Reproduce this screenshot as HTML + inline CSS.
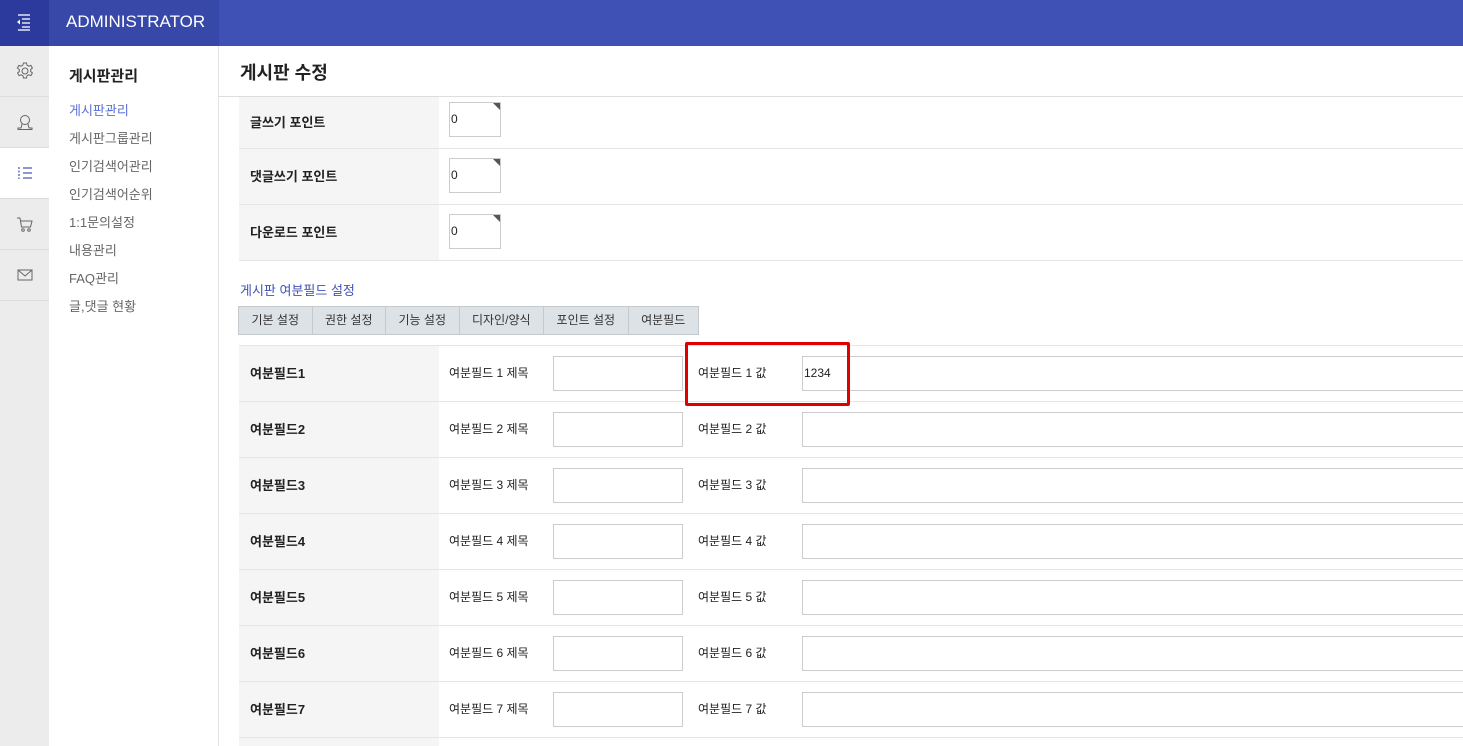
<!DOCTYPE html>
<html><head><meta charset="utf-8"><style>
*{margin:0;padding:0;box-sizing:border-box}
html,body{width:1463px;height:746px;overflow:hidden}
body{background:#fff;font-family:"Liberation Sans","Noto Sans CJK KR",sans-serif;position:relative;color:#222}
.a{position:absolute}
.hdr{left:0;top:0;width:1463px;height:46px;background:#3f51b5}
.hl{left:0;top:0;width:49px;height:46px;background:#2b3a9c}
.hm{left:49px;top:0;width:170px;height:46px;background:#3748a8;color:#fff;font-size:17px;line-height:44px;padding-left:17px}
.icol{left:0;top:46px;width:49px;height:700px;background:#ececec}
.ic{left:0;width:49px;height:51px;border-bottom:1px solid #dcdcdc;display:flex;align-items:center;justify-content:center}
.sub{left:49px;top:46px;width:170px;height:700px;background:#fff;border-right:1px solid #e3e3e3}
.sub h3{position:absolute;left:20px;top:19px;font-size:15px;font-weight:bold;color:#222}
.sub div{position:absolute;left:20px;font-size:13px;color:#666}
.ttl{left:240px;top:59px;font-size:18px;font-weight:bold;color:#222}
.tline{left:219px;top:96px;width:1244px;height:1px;background:#ddd}
.row{left:239px;width:1224px;height:56px;border-bottom:1px solid #e5e5e5}
.lab{position:absolute;left:0;top:0;width:200px;height:55px;background:#f5f5f5;font-size:13px;font-weight:bold;line-height:55px;padding-left:11px}
.pt{position:absolute;left:210px;top:9px;width:52px;height:35px;border:1px solid #ccc;font-size:12px;line-height:33px;padding-left:1px}
.pt:after{content:"";position:absolute;right:0;top:0;border-top:7px solid #555;border-left:7px solid transparent}
.t{position:absolute;font-size:12px;line-height:55px;top:0}
.in{position:absolute;top:10px;height:35px;border:1px solid #ccc;font-size:12px;line-height:33px;padding-left:1px}
.sec{left:240px;top:280px;font-size:13px;color:#3f51b5}
.tabs{left:238px;top:306px;height:29px;display:flex;border:1px solid #c4c9ce;background:#dde2e7}
.tabs div{font-size:12px;line-height:27px;padding:0 12.5px;border-right:1px solid #c4c9ce;color:#333}
.tabs div:last-child{border-right:0}
</style></head><body>
<div class="a hdr"></div>
<div class="a hl"><svg width="49" height="46"><g stroke="#fff" stroke-width="1.3"><line x1="18" y1="15" x2="30" y2="15"/><line x1="22" y1="19" x2="30" y2="19"/><line x1="22" y1="23" x2="30" y2="23"/><line x1="22" y1="27" x2="30" y2="27"/><line x1="18" y1="30" x2="30" y2="30"/></g><path d="M17 22 L20 19.5 L20 24.5Z" fill="#fff"/></svg></div>
<div class="a hm">ADMINISTRATOR</div>
<div class="a icol"></div>
<div class="a ic" style="top:46px"><svg width="20" height="20" viewBox="0 0 20 20" fill="none" stroke="#666" stroke-width="1"><circle cx="10" cy="10" r="3"/><path d="M8.5 2h3l.5 2.2 1.8 1 2.1-.8 1.5 2.6-1.7 1.5v2l1.7 1.5-1.5 2.6-2.1-.8-1.8 1-.5 2.2h-3l-.5-2.2-1.8-1-2.1.8-1.5-2.6 1.7-1.5v-2L2.4 7l1.5-2.6 2.1.8 1.8-1z"/></svg></div>
<div class="a ic" style="top:97px"><svg width="20" height="20" fill="none" stroke="#666" stroke-width="1"><circle cx="10" cy="8" r="4.5"/><path d="M7 12 L6 16 H3 V17.5 H17 V16 H14 L13 12"/></svg></div>
<div class="a ic" style="top:148px;background:#fff"><svg width="20" height="20" stroke="#3f51b5" stroke-width="1.2"><line x1="8" y1="5" x2="17" y2="5"/><line x1="8" y1="10" x2="17" y2="10"/><line x1="8" y1="15" x2="17" y2="15"/><line x1="4" y1="4" x2="4" y2="16" stroke-dasharray="2 1.5"/></svg></div>
<div class="a ic" style="top:199px"><svg width="20" height="20" fill="none" stroke="#666" stroke-width="1"><path d="M2 4h3l1.5 9h9l1.5-6H6"/><circle cx="8" cy="16" r="1.3"/><circle cx="14" cy="16" r="1.3"/></svg></div>
<div class="a ic" style="top:250px"><svg width="20" height="20" fill="none" stroke="#666" stroke-width="1"><rect x="3" y="5" width="14" height="10"/><path d="M3 5l7 6 7-6"/></svg></div>
<div class="a sub"><h3>게시판관리</h3>
<div style="top:54px;color:#5a6fd6">게시판관리</div>
<div style="top:82px">게시판그룹관리</div>
<div style="top:110px">인기검색어관리</div>
<div style="top:138px">인기검색어순위</div>
<div style="top:166px">1:1문의설정</div>
<div style="top:194px">내용관리</div>
<div style="top:222px">FAQ관리</div>
<div style="top:250px">글,댓글 현황</div>
</div>
<div class="a ttl">게시판 수정</div>
<div class="a tline"></div>
<div class="a row" style="top:92px;height:57px"><div class="lab" style="top:5px;height:51px;line-height:51px">글쓰기 포인트</div><div class="pt" style="top:10px">0</div></div>
<div class="a row" style="top:149px"><div class="lab">댓글쓰기 포인트</div><div class="pt">0</div></div>
<div class="a row" style="top:205px"><div class="lab">다운로드 포인트</div><div class="pt">0</div></div>
<div class="a sec">게시판 여분필드 설정</div>
<div class="a tabs"><div>기본 설정</div><div>권한 설정</div><div>기능 설정</div><div>디자인/양식</div><div>포인트 설정</div><div>여분필드</div></div>
<div class="a" style="left:239px;top:345px;width:1224px;height:1px;background:#e5e5e5"></div>
<div class="a row" style="top:346px"><div class="lab">여분필드1</div><div class="t" style="left:210px">여분필드 1 제목</div><div class="in" style="left:314px;width:130px"></div><div class="t" style="left:459px">여분필드 1 값</div><div class="in" style="left:563px;width:700px">1234</div></div>
<div class="a row" style="top:402px"><div class="lab">여분필드2</div><div class="t" style="left:210px">여분필드 2 제목</div><div class="in" style="left:314px;width:130px"></div><div class="t" style="left:459px">여분필드 2 값</div><div class="in" style="left:563px;width:700px"></div></div>
<div class="a row" style="top:458px"><div class="lab">여분필드3</div><div class="t" style="left:210px">여분필드 3 제목</div><div class="in" style="left:314px;width:130px"></div><div class="t" style="left:459px">여분필드 3 값</div><div class="in" style="left:563px;width:700px"></div></div>
<div class="a row" style="top:514px"><div class="lab">여분필드4</div><div class="t" style="left:210px">여분필드 4 제목</div><div class="in" style="left:314px;width:130px"></div><div class="t" style="left:459px">여분필드 4 값</div><div class="in" style="left:563px;width:700px"></div></div>
<div class="a row" style="top:570px"><div class="lab">여분필드5</div><div class="t" style="left:210px">여분필드 5 제목</div><div class="in" style="left:314px;width:130px"></div><div class="t" style="left:459px">여분필드 5 값</div><div class="in" style="left:563px;width:700px"></div></div>
<div class="a row" style="top:626px"><div class="lab">여분필드6</div><div class="t" style="left:210px">여분필드 6 제목</div><div class="in" style="left:314px;width:130px"></div><div class="t" style="left:459px">여분필드 6 값</div><div class="in" style="left:563px;width:700px"></div></div>
<div class="a row" style="top:682px"><div class="lab">여분필드7</div><div class="t" style="left:210px">여분필드 7 제목</div><div class="in" style="left:314px;width:130px"></div><div class="t" style="left:459px">여분필드 7 값</div><div class="in" style="left:563px;width:700px"></div></div>
<div class="a" style="left:239px;top:738px;width:200px;height:8px;background:#f5f5f5"></div>
<div class="a" style="left:685px;top:342px;width:165px;height:64px;border:3px solid #e00000;border-radius:2px"></div>
</body></html>
